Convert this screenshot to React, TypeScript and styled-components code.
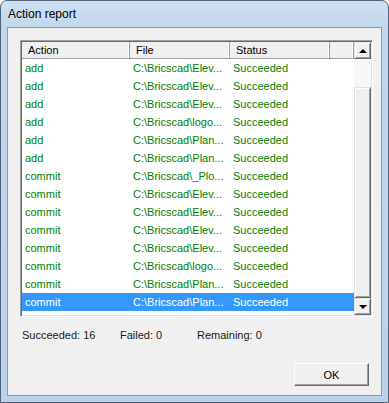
import styled, { createGlobalStyle } from 'styled-components';

interface IReportRow {
  action: string;
  file: string;
  status: string;
}

const GlobalStyle = createGlobalStyle`
  html, body {
    margin: 0;
    padding: 0;
    background: #ffffff;
  }

  body {
    font-family: 'Liberation Sans', Arial, sans-serif;
  }
`;

const Window = styled.div`
  box-sizing: border-box;
  width: 389px;
  height: 403px;
  display: flex;
  flex-direction: column;
  border: 1px solid #4f6176;
  border-radius: 7px 7px 0 0;
  background: linear-gradient(180deg, #cfe0f1 0px, #c3d7ec 26px, #bcd2e9 100%);
  padding: 0 6px 6px 6px;
`;

const TitleBar = styled.div`
  height: 26px;
  display: flex;
  align-items: center;
  padding-left: 1px;
  padding-bottom: 1px;
  box-sizing: border-box;

  > span {
    font-size: 12px;
    color: #000000;
  }
`;

const Client = styled.div`
  flex: 1;
  display: flex;
  flex-direction: column;
  border: 1px solid #8a9bb0;
  background: #f0f0f0;
  padding: 12px 8px 0 12px;
`;

const ListView = styled.div`
  box-sizing: border-box;
  width: 353px;
  height: 277px;
  display: flex;
  background: #ffffff;
  border-top: 1px solid #a0a0a0;
  border-left: 1px solid #a0a0a0;
  border-right: 1px solid #ffffff;
  border-bottom: 1px solid #ffffff;
  box-shadow: inset 1px 1px 0 #696969, inset -1px -1px 0 #e3e3e3;
  padding: 1px;
`;

const ListBody = styled.div`
  flex: 1;
  display: flex;
  flex-direction: column;
  overflow: hidden;
`;

const HeaderRow = styled.div`
  display: flex;
  height: 17px;
  background: #f0f0f0;
  border-bottom: 1px solid #a0a0a0;
  box-sizing: border-box;
`;

const HeaderCell = styled.div<{ $width?: number }>`
  box-sizing: border-box;
  width: ${(p) => (p.$width ? `${p.$width}px` : 'auto')};
  flex: ${(p) => (p.$width ? 'none' : '1')};
  padding-left: 6px;
  border-right: 1px solid #a0a0a0;
  box-shadow: inset -1px 0 0 #ffffff;
  font-size: 11px;
  line-height: 16px;
  color: #000000;
`;

const Row = styled.div<{ $selected?: boolean }>`
  display: flex;
  height: 18px;
  background: ${(p) => (p.$selected ? '#3399ff' : 'transparent')};
  color: ${(p) => (p.$selected ? '#ffffff' : '#008000')};
`;

const Cell = styled.div<{ $width: number }>`
  box-sizing: border-box;
  width: ${(p) => p.$width}px;
  padding-left: 3px;
  font-size: 11px;
  line-height: 18px;
  white-space: nowrap;
`;

const ScrollBar = styled.div`
  width: 17px;
  display: flex;
  flex-direction: column;
`;

const ScrollButton = styled.div`
  box-sizing: border-box;
  height: 17px;
  display: flex;
  align-items: center;
  justify-content: center;
  background: #f0f0f0;
  border-top: 1px solid #e3e3e3;
  border-left: 1px solid #e3e3e3;
  border-right: 1px solid #696969;
  border-bottom: 1px solid #696969;
  box-shadow: inset 1px 1px 0 #ffffff, inset -1px -1px 0 #a0a0a0;
`;

const Arrow = styled.div<{ $down?: boolean }>`
  width: 0;
  height: 0;
  border-left: 4px solid transparent;
  border-right: 4px solid transparent;
  ${(p) => (p.$down ? 'border-top: 4px solid #000;' : 'border-bottom: 4px solid #000;')}
`;

const Track = styled.div<{ $height?: number }>`
  height: ${(p) => (p.$height ? `${p.$height}px` : 'auto')};
  flex: ${(p) => (p.$height ? 'none' : '1')};
  background-color: #ffffff;
  background-image: repeating-conic-gradient(#f0f0f0 0% 25%, #ffffff 0% 50%);
  background-size: 2px 2px;
`;

const Thumb = styled(ScrollButton)`
  height: auto;
  flex: 1;
`;

const Summary = styled.div`
  display: flex;
  height: 36px;
  align-items: center;
  padding-left: 2px;
  font-size: 11px;
  color: #1a1a1a;
`;

const SummaryItem = styled.span<{ $width: number }>`
  width: ${(p) => p.$width}px;
`;

const Footer = styled.div`
  flex: 1;
  display: flex;
  justify-content: flex-end;
  align-items: flex-start;
  padding-top: 10px;
  padding-right: 4px;
`;

const OkButton = styled.button`
  box-sizing: border-box;
  width: 75px;
  height: 23px;
  padding: 0;
  font-family: 'Liberation Sans', Arial, sans-serif;
  font-size: 11px;
  color: #000000;
  background: #f0f0f0;
  border-top: 1px solid #ffffff;
  border-left: 1px solid #ffffff;
  border-right: 1px solid #696969;
  border-bottom: 1px solid #696969;
  box-shadow: inset -1px -1px 0 #a0a0a0;
`;

// file names as the list view shows them, already cut to the column width
const rows: IReportRow[] = [
  { action: 'add', file: 'C:\\Bricscad\\Elev...', status: 'Succeeded' },
  { action: 'add', file: 'C:\\Bricscad\\Elev...', status: 'Succeeded' },
  { action: 'add', file: 'C:\\Bricscad\\Elev...', status: 'Succeeded' },
  { action: 'add', file: 'C:\\Bricscad\\logo...', status: 'Succeeded' },
  { action: 'add', file: 'C:\\Bricscad\\Plan...', status: 'Succeeded' },
  { action: 'add', file: 'C:\\Bricscad\\Plan...', status: 'Succeeded' },
  { action: 'commit', file: 'C:\\Bricscad\\_Plo...', status: 'Succeeded' },
  { action: 'commit', file: 'C:\\Bricscad\\Elev...', status: 'Succeeded' },
  { action: 'commit', file: 'C:\\Bricscad\\Elev...', status: 'Succeeded' },
  { action: 'commit', file: 'C:\\Bricscad\\Elev...', status: 'Succeeded' },
  { action: 'commit', file: 'C:\\Bricscad\\Elev...', status: 'Succeeded' },
  { action: 'commit', file: 'C:\\Bricscad\\logo...', status: 'Succeeded' },
  { action: 'commit', file: 'C:\\Bricscad\\Plan...', status: 'Succeeded' },
  { action: 'commit', file: 'C:\\Bricscad\\Plan...', status: 'Succeeded' },
];

const columns = [108, 100, 100];

export default function App() {
  return (
    <>
      <GlobalStyle />
      <Window>
        <TitleBar>
          <span>Action report</span>
        </TitleBar>
        <Client>
          <ListView>
            <ListBody>
              <HeaderRow>
                <HeaderCell $width={columns[0]}>Action</HeaderCell>
                <HeaderCell $width={columns[1]}>File</HeaderCell>
                <HeaderCell $width={columns[2]}>Status</HeaderCell>
                <HeaderCell />
              </HeaderRow>
              {rows.map((row, index) => (
                <Row key={index} $selected={index === rows.length - 1}>
                  <Cell $width={columns[0]}>{row.action}</Cell>
                  <Cell $width={columns[1]}>{row.file}</Cell>
                  <Cell $width={columns[2]}>{row.status}</Cell>
                </Row>
              ))}
            </ListBody>
            <ScrollBar>
              <ScrollButton>
                <Arrow />
              </ScrollButton>
              <Track $height={28} />
              <Thumb />
              <ScrollButton>
                <Arrow $down />
              </ScrollButton>
            </ScrollBar>
          </ListView>
          <Summary>
            <SummaryItem $width={98}>Succeeded: 16</SummaryItem>
            <SummaryItem $width={77}>Failed: 0</SummaryItem>
            <SummaryItem $width={100}>Remaining: 0</SummaryItem>
          </Summary>
          <Footer>
            <OkButton>OK</OkButton>
          </Footer>
        </Client>
      </Window>
    </>
  );
}
